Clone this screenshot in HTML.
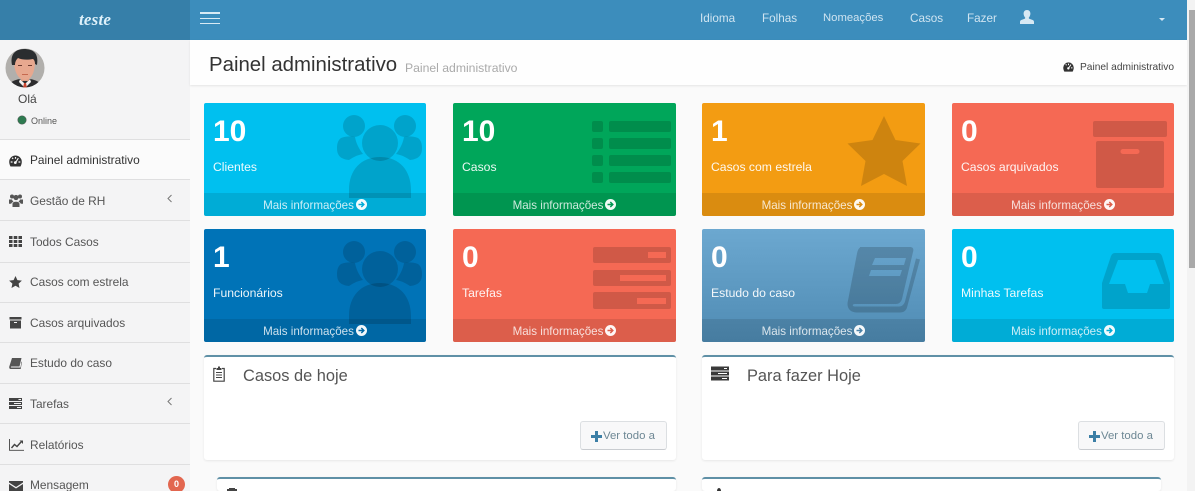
<!DOCTYPE html>
<html lang="pt"><head><meta charset="utf-8"><title>Painel administrativo</title>
<style>
html,body{margin:0;padding:0;width:1195px;height:491px;overflow:hidden;background:#fafafa;font-family:"Liberation Sans",sans-serif}
#wrap{position:relative;width:1195px;height:491px;overflow:hidden;background:#fafafa}
.a{position:absolute}
.t{position:absolute;white-space:nowrap;line-height:1}
svg{position:absolute;display:block}
.side{position:absolute;left:0;top:40px;width:190px;height:451px;background:#f4f4f5;overflow:hidden}
.ln{position:absolute;left:0;width:190px;height:1px;background:#dfdfe0}
.nav{color:#cfe4f1;font-size:11.7px;top:13px}
.m{color:#555;font-size:11.9px;left:30px;margin-top:1px}
.box{position:absolute;width:222px;height:113px;border-radius:2px;overflow:hidden;color:#fff}
.box svg{left:0;top:0}
.box .n{position:absolute;left:9px;top:14px;font-size:30px;font-weight:bold;line-height:1}
.box .l{position:absolute;left:9px;top:58px;font-size:12.2px;line-height:1;white-space:nowrap;opacity:.93}
.box .f{position:absolute;left:0;right:0;top:90px;height:23px;line-height:25px;text-align:center;font-size:11.6px;color:rgba(255,255,255,.8);background:rgba(0,0,0,.1)}
.box .f svg{position:static;display:inline-block;vertical-align:-1px;margin-left:2px}
.panel{position:absolute;background:#fff;border-top:2px solid #5f90a6;border-radius:3px;box-shadow:0 1px 2px rgba(0,0,0,.08)}
.h{position:absolute;font-size:16.4px;color:#555;line-height:1;white-space:nowrap}
.btn{position:absolute;width:85px;height:27px;border:1px solid #dcdfe2;border-bottom-color:#c9ccd0;border-radius:3px;background:#f8f8f9;color:#6d8794;font-size:11.4px;line-height:29px;white-space:nowrap}
</style></head><body>
<div id="wrap">

<!-- top bar -->
<div class="a" style="left:190px;top:0;width:997px;height:40px;background:#3c8dbc"></div>
<div class="a" style="left:0;top:0;width:190px;height:40px;background:#367fa9"></div>
<div class="t" style="left:79px;top:10px;font:italic bold 17px 'Liberation Serif',serif;color:#dff1fa;letter-spacing:.2px">teste</div>
<div class="a" style="left:200px;top:12px;width:20px;height:1.5px;background:#d8eaf4"></div>
<div class="a" style="left:200px;top:17.5px;width:20px;height:1.5px;background:#d8eaf4"></div>
<div class="a" style="left:200px;top:22.5px;width:20px;height:1.5px;background:#d8eaf4"></div>
<div class="t nav" style="left:700px">Idioma</div>
<div class="t nav" style="left:762px">Folhas</div>
<div class="t nav" style="left:823px;font-size:11.3px">Nomeações</div>
<div class="t nav" style="left:910px">Casos</div>
<div class="t nav" style="left:967px">Fazer</div>
<svg style="left:1020px;top:10px" width="14" height="14" viewBox="0 0 14 14"><path fill="#d6e8f3" d="M7 0c2.200 0 3.400 1.600 3.400 3.600 0 1.500-.7 3-1.500 3.900-.3.4-.1 1 .4 1.200l3.400 1.300c.9.4 1.300 1 1.300 2V14H0v-2c0-1 .4-1.600 1.300-2l3.400-1.300c.5-.2.700-.8.400-1.200C4.300 6.600 3.600 5.100 3.600 3.600 3.600 1.600 4.800 0 7 0z"/></svg>
<div class="a" style="left:1159px;top:18px;width:0;height:0;border-left:3.5px solid transparent;border-right:3.5px solid transparent;border-top:3px solid #d6e8f3"></div>

<!-- sidebar -->
<div class="side">
 <div class="a" style="left:0;top:100px;width:190px;height:39px;background:#fbfbfb"></div>
 <div class="ln" style="top:99px"></div><div class="ln" style="top:139px"></div><div class="ln" style="top:180px"></div><div class="ln" style="top:222px"></div><div class="ln" style="top:262px"></div><div class="ln" style="top:302px"></div><div class="ln" style="top:343px"></div><div class="ln" style="top:383px"></div><div class="ln" style="top:424px"></div>
</div>
<svg style="left:5px;top:48px" width="40" height="40" viewBox="0 0 40 40"><defs><clipPath id="av"><circle cx="20" cy="20" r="19.5"/></clipPath></defs><g clip-path="url(#av)"><rect width="40" height="40" fill="#b1afac"/><path fill="#2c2c2e" d="M3 40c1-6 6-8 12-9h10c6 1 11 3 12 9z"/><path fill="#f3f1ef" d="M15 31l5 5 5-5 1 3-6 6-6-6z"/><path fill="#c8452f" d="M19 35h2l1 5h-4z"/><rect x="16" y="24" width="8" height="9" fill="#dc9d84"/><path fill="#e7a88f" d="M9 13c0 10 4 19 11 19s10-9 10-19c0-6-21-6-21 0z"/><path fill="#2a2d2f" d="M7 17C5 8 9 1 19 1c9 0 15 4 13 16l-2-1c0-2-.5-4-2-5-5 1-11 1-15-1-2 2-3 4-3 7z"/><path fill="#6b3b30" d="M13 17h4v1h-4zM23 17h4v1h-4z"/><path fill="#c6694f" d="M17 26h6v1h-6z"/></g></svg>
<div class="t" style="left:18px;top:93px;font-size:12px;color:#444">Olá</div>
<div class="a" style="left:18px;top:116px;width:8px;height:8px;border-radius:50%;background:#2e7a50;box-shadow:0 0 0 .5px #555"></div>
<div class="t" style="left:31px;top:116px;font-size:9px;color:#555;margin-top:.5px">Online</div>

<svg style="left:9px;top:155px" width="13" height="12" viewBox="0 0 13 12"><path fill="#333" d="M6.500.5A6.300 6.300 0 0 0 .2 6.800c0 1.700.5 3.200 1.300 4.700h10c.8-1.500 1.300-3 1.300-4.700A6.300 6.300 0 0 0 6.500.5z"/><path fill="#fbfbfb" d="M5.900 2h1.200v1.800H5.900zM2.700 3.300l.9-.9 1 1-.9.9zM1.700 6.400h1.800v1.200H1.700zM9.500 6.400h1.800v1.200H9.500zM8.900 2.800l.9.600-2.200 3.600c.3.700.1 1.500-.5 1.800-.8.500-1.800.1-2.100-.7-.3-.8.200-1.700 1-1.900.3-.1.600-.1.800 0z"/></svg>
<div class="t m" style="top:154px;color:#333">Painel administrativo</div>
<svg style="left:9px;top:194px" width="14" height="13" viewBox="0 0 14 13"><g fill="#555"><circle cx="3" cy="2.500" r="2"/><circle cx="11" cy="2.500" r="2"/><circle cx="7" cy="3.500" r="2.600"/><path d="M0 5.500h3c.2.800.8 1.600 1.500 2.200-1.200.5-2 1.200-2.300 2H0zM14 5.500h-3c-.2.800-.8 1.600-1.500 2.200 1.200.5 2 1.200 2.300 2H14zM3.500 10c0-1.600 1.500-2.300 3.500-2.300s3.500.7 3.500 2.300v3h-7z"/></g></svg>
<div class="t m" style="top:195px">Gestão de RH</div>
<svg style="left:166px;top:193px" width="8" height="12" viewBox="0 0 8 12"><path d="M5.500 2L2 5.500 5.500 9" fill="none" stroke="#777" stroke-width="1"/></svg>
<svg style="left:9px;top:236px" width="13" height="11" viewBox="0 0 13 11"><path fill="#444" d="M0 0h3.500v3H0zM4.700 0h3.600v3H4.700zM9.500 0H13v3H9.500zM0 4h3.500v3H0zM4.700 4h3.600v3H4.700zM9.500 4H13v3H9.500zM0 8h3.500v3H0zM4.700 8h3.600v3H4.700zM9.500 8H13v3H9.500z"/></svg>
<div class="t m" style="top:236px">Todos Casos</div>
<svg style="left:9px;top:276px" width="13" height="12" viewBox="0 0 13 12"><path fill="#444" d="M6.500 0l1.900 4.100 4.500.5-3.300 3 .9 4.400-4-2.200-4 2.200.9-4.400L.1 4.600l4.500-.5z"/></svg>
<div class="t m" style="top:276px">Casos com estrela</div>
<svg style="left:9px;top:317px" width="13" height="12" viewBox="0 0 13 12"><path fill="#444" fill-rule="evenodd" d="M.5 0h12v2.500H.5zM1 3.500h11v8H1zM5 5v1h3V5z"/></svg>
<div class="t m" style="top:317px">Casos arquivados</div>
<svg style="left:9px;top:358px" width="13" height="11" viewBox="0 0 13 11"><path fill="#555" d="M3 0h9.500l-2 8.500H2.500c-.7 0-1 .9-.2 1h9.200l1-6 .5.500-1.300 7H2C.5 11 0 10 .3 8.500z"/></svg>
<div class="t m" style="top:357px">Estudo do caso</div>
<svg style="left:9px;top:398px" width="13" height="11" viewBox="0 0 13 11"><path fill="#444" fill-rule="evenodd" d="M0 0h13v3H0zM9.500 1v1H12V1zM0 4h13v3H0zM5 5v1h7V5zM0 8h13v3H0zM8 9v1h4V9z"/></svg>
<div class="t m" style="top:398px">Tarefas</div>
<svg style="left:166px;top:396px" width="8" height="12" viewBox="0 0 8 12"><path d="M5.500 2L2 5.500 5.500 9" fill="none" stroke="#777" stroke-width="1"/></svg>
<svg style="left:9px;top:439px" width="15" height="12" viewBox="0 0 15 12"><path fill="none" stroke="#444" stroke-width=".9" d="M.5 0v11.300H15"/><path fill="none" stroke="#444" stroke-width="1.400" d="M2.500 9l3-3.500 2.500 2 4-4.500"/><path fill="#444" d="M10.500 1.500H14V5z"/></svg>
<div class="t m" style="top:439px">Relatórios</div>
<svg style="left:9px;top:481px" width="14" height="10" viewBox="0 0 14 10"><path fill="#444" d="M0 0h14v1.500L7 6 0 1.500zM0 3l7 4.500L14 3v7H0z"/></svg>
<div class="t m" style="top:479px">Mensagem</div>
<div class="a" style="left:168px;top:476px;width:17px;height:17px;border-radius:50%;background:#e2664f"></div>
<div class="t" style="left:174px;top:480px;font-size:9px;font-weight:bold;color:#fff">0</div>

<!-- title bar -->
<div class="a" style="left:190px;top:40px;width:997px;height:45px;background:#fefefe;box-shadow:0 1px 2px rgba(0,0,0,.09)"></div>
<div class="t" style="left:209px;top:55px;font-size:20.4px;color:#333">Painel administrativo</div>
<div class="t" style="left:405px;top:62px;font-size:12.2px;color:#aaa">Painel administrativo</div>
<svg style="left:1063px;top:62px" width="11" height="10" viewBox="0 0 13 12"><path fill="#333" d="M6.500.5A6.300 6.300 0 0 0 .2 6.800c0 1.700.5 3.200 1.300 4.700h10c.8-1.500 1.300-3 1.300-4.700A6.300 6.300 0 0 0 6.500.5z"/><path fill="#fff" d="M5.900 2h1.200v1.800H5.900zM2.700 3.300l.9-.9 1 1-.9.9zM9.500 6.400h1.800v1.200H9.500zM8.900 2.800l.9.600-2.200 3.600c.3.700.1 1.500-.5 1.800-.8.500-1.800.1-2.100-.7-.3-.8.200-1.700 1-1.900.3-.1.600-.1.800 0z"/></svg>
<div class="t" style="left:1080px;top:63px;font-size:10.2px;color:#444">Painel administrativo</div>

<!-- small boxes -->
<div class="box" style="left:204px;top:103px;background:#00c0ef">
 <svg width="222" height="113" viewBox="204 103 222 113"><g fill="rgba(0,0,0,.15)"><circle cx="354" cy="126" r="11"/><circle cx="405" cy="126" r="11"/><circle cx="380" cy="143" r="18"/><path d="M341 138c5-2 10-2 14-1 1 6 4 12 8 17-6 1-11 4-14 6-10-1-12-6-12-12 0-4 1-8 4-10zM418 138c-5-2-10-2-14-1-1 6-4 12-8 17 6 1 11 4 14 6 10-1 12-6 12-12 0-4-1-8-4-10zM349 190c0-20 12-33 31-33s31 13 31 33v8h-62z"/></g></svg>
 <div class="n">10</div><div class="l">Clientes</div><div class="f">Mais informações<svg width="11" height="11" viewBox="0 0 11 11"><circle cx="5.500" cy="5.500" r="5.500" fill="#fff" fill-opacity=".95"/><path d="M2.500 5.500h5M5.300 3l2.500 2.500L5.300 8" fill="none" stroke="#00acd7" stroke-width="1.500"/></svg></div>
</div>
<div class="box" style="left:453px;top:103px;width:223px;background:#00a65a">
 <svg width="223" height="113" viewBox="453 103 223 113"><g fill="rgba(0,0,0,.15)"><rect x="592" y="121" width="11" height="11" rx="2"/><rect x="609" y="121" width="62" height="11" rx="2"/><rect x="592" y="138" width="11" height="11" rx="2"/><rect x="609" y="138" width="62" height="11" rx="2"/><rect x="592" y="155" width="11" height="11" rx="2"/><rect x="609" y="155" width="62" height="11" rx="2"/><rect x="592" y="172" width="11" height="11" rx="2"/><rect x="609" y="172" width="62" height="11" rx="2"/></g></svg>
 <div class="n">10</div><div class="l">Casos</div><div class="f">Mais informações<svg width="11" height="11" viewBox="0 0 11 11"><circle cx="5.500" cy="5.500" r="5.500" fill="#fff" fill-opacity=".95"/><path d="M2.500 5.500h5M5.300 3l2.500 2.500L5.300 8" fill="none" stroke="#009551" stroke-width="1.500"/></svg></div>
</div>
<div class="box" style="left:702px;top:103px;width:223px;background:#f39c12">
 <svg width="223" height="113" viewBox="702 103 223 113"><path fill="rgba(0,0,0,.15)" d="M884 116l11.500 24 25 3.500-18 17.500 4.500 25-23-12-23 12 4.500-25-18-17.500 25-3.500z"/></svg>
 <div class="n">1</div><div class="l">Casos com estrela</div><div class="f">Mais informações<svg width="11" height="11" viewBox="0 0 11 11"><circle cx="5.500" cy="5.500" r="5.500" fill="#fff" fill-opacity=".95"/><path d="M2.500 5.500h5M5.300 3l2.500 2.500L5.300 8" fill="none" stroke="#da8c10" stroke-width="1.500"/></svg></div>
</div>
<div class="box" style="left:952px;top:103px;background:#f56954">
 <svg width="222" height="113" viewBox="952 103 222 113"><g fill="rgba(0,0,0,.15)"><rect x="1093" y="121" width="74" height="16" rx="2"/><path fill-rule="evenodd" d="M1098 141h64a2 2 0 0 1 2 2v43a2 2 0 0 1-2 2h-64a2 2 0 0 1-2-2v-43a2 2 0 0 1 2-2zM1123 149a2.500 2.500 0 0 0 0 5h14a2.500 2.500 0 0 0 0-5z"/></g></svg>
 <div class="n">0</div><div class="l">Casos arquivados</div><div class="f">Mais informações<svg width="11" height="11" viewBox="0 0 11 11"><circle cx="5.500" cy="5.500" r="5.500" fill="#fff" fill-opacity=".95"/><path d="M2.500 5.500h5M5.300 3l2.500 2.500L5.300 8" fill="none" stroke="#dc5e4b" stroke-width="1.500"/></svg></div>
</div>

<div class="box" style="left:204px;top:229px;background:#0073b7">
 <svg width="222" height="113" viewBox="204 229 222 113"><g fill="rgba(0,0,0,.15)"><circle cx="354" cy="252" r="11"/><circle cx="405" cy="252" r="11"/><circle cx="380" cy="269" r="18"/><path d="M341 264c5-2 10-2 14-1 1 6 4 12 8 17-6 1-11 4-14 6-10-1-12-6-12-12 0-4 1-8 4-10zM418 264c-5-2-10-2-14-1-1 6-4 12-8 17 6 1 11 4 14 6 10-1 12-6 12-12 0-4-1-8-4-10zM349 316c0-20 12-33 31-33s31 13 31 33v8h-62z"/></g></svg>
 <div class="n">1</div><div class="l">Funcionários</div><div class="f">Mais informações<svg width="11" height="11" viewBox="0 0 11 11"><circle cx="5.500" cy="5.500" r="5.500" fill="#fff" fill-opacity=".95"/><path d="M2.500 5.500h5M5.300 3l2.500 2.500L5.300 8" fill="none" stroke="#0067a4" stroke-width="1.500"/></svg></div>
</div>
<div class="box" style="left:453px;top:229px;width:223px;background:#f56954">
 <svg width="223" height="113" viewBox="453 229 223 113"><path fill="rgba(0,0,0,.15)" fill-rule="evenodd" d="M595 247h74a2 2 0 0 1 2 2v12a2 2 0 0 1-2 2h-74a2 2 0 0 1-2-2v-12a2 2 0 0 1 2-2zM648 252v6h18v-6zM595 270h74a2 2 0 0 1 2 2v12a2 2 0 0 1-2 2h-74a2 2 0 0 1-2-2v-12a2 2 0 0 1 2-2zM620 275v6h46v-6zM595 292h74a2 2 0 0 1 2 2v13a2 2 0 0 1-2 2h-74a2 2 0 0 1-2-2v-13a2 2 0 0 1 2-2zM637 298v6h29v-6z"/></svg>
 <div class="n">0</div><div class="l">Tarefas</div><div class="f">Mais informações<svg width="11" height="11" viewBox="0 0 11 11"><circle cx="5.500" cy="5.500" r="5.500" fill="#fff" fill-opacity=".95"/><path d="M2.500 5.500h5M5.300 3l2.500 2.500L5.300 8" fill="none" stroke="#dc5e4b" stroke-width="1.500"/></svg></div>
</div>
<div class="box" style="left:702px;top:229px;width:223px;background:linear-gradient(#6ca8d0,#4f8bb3)">
 <svg width="223" height="113" viewBox="702 229 223 113"><path fill="rgba(0,0,0,.17)" fill-rule="evenodd" d="M860 247h50c3 0 4 2 3 5l-11 47c-1 3-3 5-6 5h-41c-3 0-3 2.500 0 2.500h44c3 0 5-2 6-5l11-43 4 1-13 48c-1 3-3 5-7 5h-43c-7 0-11-5-9-12l9-47c.5-3 1.500-5 3-6zM875 258l-3 7h32l2-7zM871 270l-2 6h31l2-6z"/></svg>
 <div class="n">0</div><div class="l">Estudo do caso</div><div class="f">Mais informações<svg width="11" height="11" viewBox="0 0 11 11"><circle cx="5.500" cy="5.500" r="5.500" fill="#fff" fill-opacity=".95"/><path d="M2.500 5.500h5M5.300 3l2.500 2.500L5.300 8" fill="none" stroke="#4a82a8" stroke-width="1.500"/></svg></div>
</div>
<div class="box" style="left:952px;top:229px;background:#00c0ef">
 <svg width="222" height="113" viewBox="952 229 222 113"><path fill="rgba(0,0,0,.15)" fill-rule="evenodd" d="M1115 253h43c2 0 3 1 4 3l8 27v24a2 2 0 0 1-2 2h-64a2 2 0 0 1-2-2v-24l9-27c1-2 2-3 4-3zM1118 260l-9 24h16l3 9h19l3-9h14l-9-24z"/></svg>
 <div class="n">0</div><div class="l">Minhas Tarefas</div><div class="f">Mais informações<svg width="11" height="11" viewBox="0 0 11 11"><circle cx="5.500" cy="5.500" r="5.500" fill="#fff" fill-opacity=".95"/><path d="M2.500 5.500h5M5.300 3l2.500 2.500L5.300 8" fill="none" stroke="#00acd7" stroke-width="1.500"/></svg></div>
</div>

<!-- panels -->
<div class="panel" style="left:204px;top:355px;width:472px;height:103px"></div>
<svg style="left:213px;top:366px" width="12" height="16" viewBox="0 0 12 16"><path fill="none" stroke="#444" stroke-width="1.200" d="M3 2.500H.8v12.700h10.400V2.500H9"/><path fill="#444" d="M3.500 2h1.500V.5h2V2h1.500v2h-5zM3 6h6v1H3zM3 8.500h6v1H3zM3 11h6v1H3z"/></svg>
<div class="h" style="left:243px;top:368px">Casos de hoje</div>
<div class="btn" style="left:580px;top:421px"><svg style="left:10px;top:9px" width="11" height="11" viewBox="0 0 11 11"><path fill="#3c7fa6" d="M4 0h3v4h4v3H7v4H4V7H0V4h4z"/></svg><span style="position:absolute;left:22px">Ver todo a</span></div>

<div class="panel" style="left:702px;top:355px;width:472px;height:103px"></div>
<svg style="left:711px;top:366px" width="18" height="15" viewBox="0 0 18 15"><path fill="#3a3a3a" fill-rule="evenodd" d="M0 .5h18v4H0zM13 2v1h3V2zM0 5.500h18v4H0zM7 7v1h9V7zM0 10.500h18v4H0zM11 12v1h5v-1z"/></svg>
<div class="h" style="left:747px;top:368px">Para fazer Hoje</div>
<div class="btn" style="left:1078px;top:421px"><svg style="left:10px;top:9px" width="11" height="11" viewBox="0 0 11 11"><path fill="#3c7fa6" d="M4 0h3v4h4v3H7v4H4V7H0V4h4z"/></svg><span style="position:absolute;left:22px">Ver todo a</span></div>

<div class="panel" style="left:217px;top:477px;width:459px;height:12px"></div>
<div class="panel" style="left:702px;top:477px;width:459px;height:12px"></div>
<svg style="left:226px;top:488px" width="12" height="3" viewBox="0 0 12 3"><path fill="#444" d="M1 1h2V0h6v1h2v2H1z"/></svg>
<svg style="left:714px;top:488px" width="10" height="3" viewBox="0 0 10 3"><path fill="#333" d="M3 3a2 3 0 0 1 4 0z"/></svg>

<!-- scrollbar -->
<div class="a" style="left:1187px;top:0;width:8px;height:491px;background:#f3f3f3"></div>
<div class="a" style="left:1189px;top:10px;width:6px;height:258px;background:#a9a9a9"></div>
</div>
</body></html>
